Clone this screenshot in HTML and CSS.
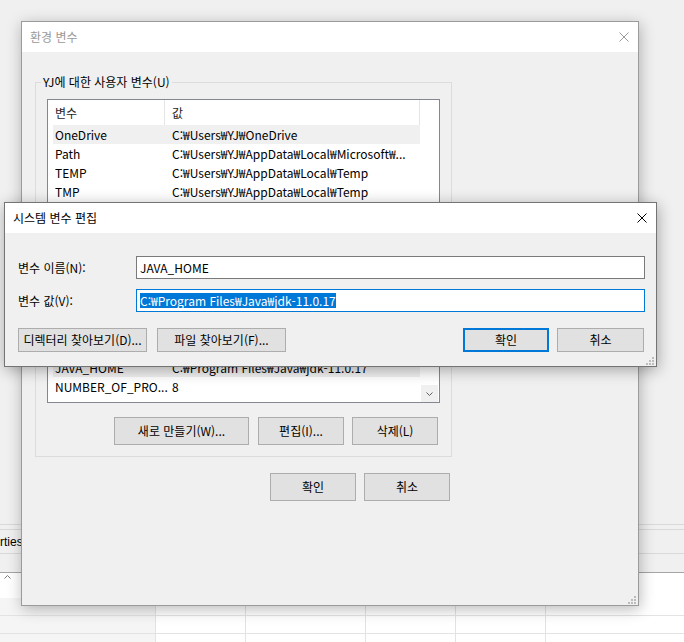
FILE: index.html
```html
<!DOCTYPE html>
<html lang="ko">
<head>
  <meta charset="UTF-8">
  <meta name="viewport" content="width=device-width, initial-scale=1.0">
  <title>환경 변수</title>
  <link rel="stylesheet" href="styles.css">
</head>
<body>
  <div class="desktop">
    <!-- app window behind the dialogs -->
    <div class="app">
      <div class="app-top"></div>
      <div class="app-rule"></div>
      <div class="app-tabs"><span class="app-tab-label">Properties</span></div>
      <div class="app-bar"></div>
      <div class="grid-head">
        <svg class="sort-up" width="7" height="4" viewBox="0 0 7 4"><path d="M0.5 3.5L3.5 0.5L6.5 3.5" fill="none" stroke="#7a7a7a"/></svg>
      </div>
      <div class="grid-row"><span></span><span></span><span></span><span></span><span></span><span></span></div>
      <div class="grid-row"><span></span><span></span><span></span><span></span><span></span><span></span></div>
      <div class="grid-row"><span></span><span></span><span></span><span></span><span></span><span></span></div>
    </div>

    <!-- 환경 변수 -->
    <div class="window env">
      <div class="titlebar">
        <span class="title">환경 변수</span>
        <svg class="close" width="10" height="10" viewBox="0 0 10 10"><path d="M0.5 0.5L9.5 9.5M9.5 0.5L0.5 9.5" stroke="#999" fill="none"/></svg>
      </div>
      <div class="env-body">
        <fieldset class="group">
          <legend>YJ에 대한 사용자 변수(U)</legend>
          <div class="listview list-user">
            <div class="lv-head"><span class="h-name">변수</span><span class="h-value">값</span></div>
            <div class="lv-row sel"><span class="lv-name">OneDrive</span><span class="lv-value">C:₩Users₩YJ₩OneDrive</span></div>
            <div class="lv-row"><span class="lv-name">Path</span><span class="lv-value">C:₩Users₩YJ₩AppData₩Local₩Microsoft₩...</span></div>
            <div class="lv-row"><span class="lv-name">TEMP</span><span class="lv-value">C:₩Users₩YJ₩AppData₩Local₩Temp</span></div>
            <div class="lv-row"><span class="lv-name">TMP</span><span class="lv-value">C:₩Users₩YJ₩AppData₩Local₩Temp</span></div>
          </div>
          <div class="btn-row">
            <button class="btn btn-wide">새로 만들기(N)...</button>
            <button class="btn">편집(E)...</button>
            <button class="btn">삭제(D)</button>
          </div>
        </fieldset>

        <fieldset class="group group-sys">
          <legend>시스템 변수(S)</legend>
          <div class="listview list-sys">
            <div class="lv-head"><span class="h-name">변수</span><span class="h-value">값</span></div>
            <div class="lv-row"><span class="lv-name">ComSpec</span><span class="lv-value">C:₩WINDOWS₩system32₩cmd.exe</span></div>
            <div class="lv-row"><span class="lv-name">DriverData</span><span class="lv-value">C:₩Windows₩System32₩Drivers₩DriverData</span></div>
            <div class="lv-row sel"><span class="lv-name">JAVA_HOME</span><span class="lv-value">C:₩Program Files₩Java₩jdk-11.0.17</span></div>
            <div class="lv-row"><span class="lv-name">NUMBER_OF_PRO...</span><span class="lv-value">8</span></div>
            <div class="scroll-down">
              <svg width="7" height="4" viewBox="0 0 7 4"><path d="M0.5 0.5L3.5 3.5L6.5 0.5" fill="none" stroke="#606060"/></svg>
            </div>
          </div>
          <div class="btn-row">
            <button class="btn btn-wide">새로 만들기(W)...</button>
            <button class="btn">편집(I)...</button>
            <button class="btn">삭제(L)</button>
          </div>
        </fieldset>

        <div class="dlg-actions">
          <button class="btn">확인</button>
          <button class="btn">취소</button>
        </div>
      </div>
      <svg class="grip" width="8" height="8" viewBox="0 0 8 8" fill="#bcbcbc">
        <rect x="6" y="0" width="2" height="2"/><rect x="3" y="3" width="2" height="2"/><rect x="6" y="3" width="2" height="2"/>
        <rect x="0" y="6" width="2" height="2"/><rect x="3" y="6" width="2" height="2"/><rect x="6" y="6" width="2" height="2"/>
      </svg>
    </div>

    <!-- 시스템 변수 편집 -->
    <div class="window edit">
      <div class="titlebar">
        <span class="title">시스템 변수 편집</span>
        <svg class="close" width="10" height="10" viewBox="0 0 10 10"><path d="M0.5 0.5L9.5 9.5M9.5 0.5L0.5 9.5" stroke="#000" fill="none"/></svg>
      </div>
      <div class="edit-body">
        <div class="field">
          <span class="field-label">변수 이름(N):</span>
          <div class="textbox">JAVA_HOME</div>
        </div>
        <div class="field">
          <span class="field-label">변수 값(V):</span>
          <div class="textbox focus"><span class="selected">C:₩Program Files₩Java₩jdk-11.0.17</span></div>
        </div>
        <div class="edit-actions">
          <button class="btn btn-browse">디렉터리 찾아보기(D)...</button>
          <button class="btn btn-browse">파일 찾아보기(F)...</button>
          <button class="btn default push">확인</button>
          <button class="btn btn-cancel">취소</button>
        </div>
      </div>
      <svg class="grip" width="8" height="8" viewBox="0 0 8 8" fill="#bcbcbc">
        <rect x="6" y="0" width="2" height="2"/><rect x="3" y="3" width="2" height="2"/><rect x="6" y="3" width="2" height="2"/>
        <rect x="0" y="6" width="2" height="2"/><rect x="3" y="6" width="2" height="2"/><rect x="6" y="6" width="2" height="2"/>
      </svg>
    </div>
  </div>
</body>
</html>
```

FILE: styles.css
```css
* {
  box-sizing: border-box;
}
html, body {
  margin: 0;
  padding: 0;
}
body {
  width: 684px;
  height: 642px;
  overflow: hidden;
  background: #f0f0f0;
  font-family: "Noto Sans CJK KR", sans-serif;
  font-size: 12px;
  line-height: 16px;
  color: #000;
}
.desktop {
  position: relative;
  width: 684px;
  height: 642px;
  overflow: hidden;
}

/* background app */
.app-top {
  height: 524px;
}
.app-rule {
  height: 5px;
  border-top: 1px solid #d9d9d9;
}
.app-tabs {
  height: 25px;
  border-top: 1px solid #d9d9d9;
  border-bottom: 1px solid #d9d9d9;
  display: flex;
  align-items: center;
  white-space: nowrap;
  font-family: "Liberation Sans", sans-serif;
}
.app-tab-label {
  margin-left: -32px;
}
.app-bar {
  height: 19px;
  border-bottom: 1px solid #a5a5a5;
}
.grid-head {
  height: 25px;
  background: #fff;
  padding: 2px 0 0 4px;
}
.sort-up {
  display: block;
}
.grid-row {
  display: grid;
  grid-template-columns: 155px 90px 120px 90px 90px 1fr;
  height: 18px;
  border-bottom: 1px solid #e3e3e3;
}
.grid-row span {
  background: #fff;
  border-left: 1px solid #e3e3e3;
}
.grid-row span:first-child {
  background: #f5f5f5;
  border-left: 0;
}

/* windows */
.window {
  position: absolute;
  background: #f0f0f0;
  display: flex;
  flex-direction: column;
}
.env {
  left: 21px;
  top: 21px;
  width: 618px;
  height: 585px;
  border: 1px solid #9b9b9b;
  box-shadow: 1px 3px 14px rgba(0, 0, 0, 0.28);
}
.edit {
  left: 4px;
  top: 202px;
  width: 653px;
  height: 165px;
  border: 1px solid #747474;
  box-shadow: 1px 3px 14px rgba(0, 0, 0, 0.32);
}
.titlebar {
  height: 30px;
  background: #fff;
  display: flex;
  align-items: center;
  padding: 0 9px 0 8px;
  flex-shrink: 0;
}
.env .title {
  color: #999;
}
.close {
  margin-left: auto;
  display: block;
}
.grip {
  position: absolute;
  right: 2px;
  bottom: 1px;
}

/* 환경 변수 */
.env-body {
  padding-left: 13px;
}
.group {
  margin: 22px 0 0;
  padding: 9px 11px 11px;
  border: 1px solid #dcdcdc;
  width: 417px;
  min-width: 0;
}
.group legend {
  padding: 0 2px;
  margin-left: -6px;
  line-height: 16px;
}
.group-sys {
  margin-top: 9px;
}
.listview {
  position: relative;
  border: 1px solid #828790;
  background: #fff;
  overflow: hidden;
}
.list-user {
  height: 107px;
}
.list-sys {
  height: 109px;
}
.lv-head {
  display: flex;
  height: 25px;
}
.lv-head span {
  display: flex;
  align-items: center;
  padding-left: 7px;
  border-right: 1px solid #e5e5e5;
  color: #1e1e1e;
}
.h-name {
  width: 117px;
}
.h-value {
  width: 255px;
}
.lv-row {
  display: flex;
  align-items: center;
  height: 19px;
  width: 367px;
  margin-left: 5px;
  white-space: nowrap;
}
.lv-row.sel {
  background: #f0f0f0;
}
.lv-name {
  width: 119px;
  padding-left: 2px;
  overflow: hidden;
}
.lv-value {
  flex: 1;
  overflow: hidden;
}
.scroll-down {
  position: absolute;
  right: 1px;
  bottom: 0;
  width: 17px;
  height: 17px;
  background: #f0f0f0;
  display: flex;
  align-items: center;
  justify-content: center;
}
.scroll-down svg {
  display: block;
}
.btn {
  width: 86px;
  height: 28px;
  padding: 0;
  margin: 0;
  background: #e1e1e1;
  border: 1px solid #adadad;
  font: inherit;
  color: #000;
  white-space: nowrap;
}
.btn-row {
  display: flex;
  justify-content: flex-end;
  gap: 8px;
  margin-top: 14px;
  padding-right: 2px;
}
.btn-wide {
  width: 135px;
  margin-right: 1px;
}
.dlg-actions {
  display: flex;
  justify-content: flex-end;
  gap: 8px;
  width: 417px;
  margin-top: 16px;
  padding-right: 2px;
}

/* 시스템 변수 편집 */
.edit-body {
  padding: 23px 11px 0 13px;
}
.field {
  display: flex;
  align-items: center;
  height: 23px;
}
.field + .field {
  margin-top: 10px;
}
.field-label {
  width: 118px;
  flex-shrink: 0;
}
.textbox {
  flex: 1;
  height: 23px;
  border: 1px solid #7a7a7a;
  background: #fff;
  padding-left: 3px;
  display: flex;
  align-items: center;
  white-space: nowrap;
}
.textbox.focus {
  border-color: #0078d7;
}
.selected {
  background: #0078d7;
  color: #fff;
  line-height: 15px;
}
.edit-actions {
  display: flex;
  gap: 10px;
  margin-top: 16px;
  margin-right: 1px;
}
.edit-actions .btn {
  height: 24px;
}
.btn-browse {
  width: 129px;
}
.btn.push {
  margin-left: auto;
}
.btn.default {
  border: 2px solid #0078d7;
}
.btn-cancel {
  width: 87px;
  margin-left: -2px;
}
```
